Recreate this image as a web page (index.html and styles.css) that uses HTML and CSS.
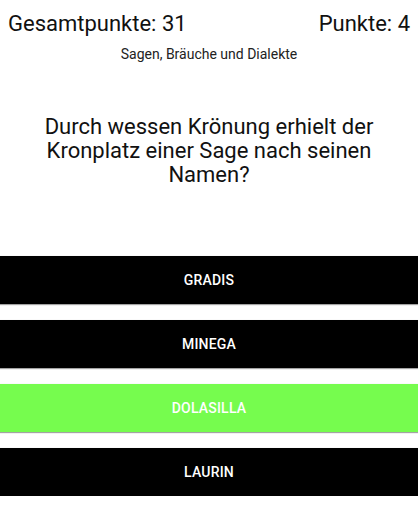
FILE: index.html
```html
<!DOCTYPE html>
<html lang="de">
<head>
<meta charset="utf-8">
<title>Quiz</title>
<link rel="stylesheet" href="styles.css">
</head>
<body>
<div class="screen">
  <header class="scores">
    <span class="score">Gesamtpunkte: 31</span>
    <span class="score">Punkte: 4</span>
  </header>
  <div class="category">Sagen, Bräuche und Dialekte</div>
  <h1 class="question">Durch wessen Krönung erhielt der Kronplatz einer Sage nach seinen Namen?</h1>
  <div class="answers">
    <button class="answer">GRADIS</button>
    <button class="answer">MINEGA</button>
    <button class="answer answer--correct">DOLASILLA</button>
    <button class="answer">LAURIN</button>
  </div>
</div>
</body>
</html>
```

FILE: styles.css
```css
html, body {
  margin: 0;
  padding: 0;
  background: #ffffff;
}

body {
  font-family: Roboto, "Noto Sans", "Liberation Sans", sans-serif;
  color: #000000;
}

.screen {
  display: flex;
  flex-direction: column;
  width: 418px;
}

.scores {
  display: flex;
  justify-content: space-between;
  padding: 0 8px;
  margin-top: 11px;
}

.score {
  font-size: 22px;
  line-height: 26px;
  color: #111111;
}

.category {
  margin-top: 9px;
  text-align: center;
  font-size: 14px;
  line-height: 16px;
  color: #222222;
}

.question {
  margin: 53px 0 0;
  padding: 0 16px;
  text-align: center;
  font-size: 22px;
  line-height: 24px;
  font-weight: 400;
  color: #111111;
}

.answers {
  display: flex;
  flex-direction: column;
  gap: 16px;
  margin-top: 69px;
}

.answer {
  display: block;
  width: 100%;
  height: 48px;
  margin: 0;
  padding: 0;
  border: none;
  background: #000000;
  color: #ffffff;
  font-family: Roboto, "Noto Sans", "Liberation Sans", sans-serif;
  font-size: 14px;
  font-weight: 500;
  line-height: 48px;
  letter-spacing: 0.2px;
  text-align: center;
  box-shadow: 0 1px 1px rgba(0, 0, 0, 0.35), 0 0 1px rgba(0, 0, 0, 0.12);
}

.answer--correct {
  background: #76fc4e;
}
```
